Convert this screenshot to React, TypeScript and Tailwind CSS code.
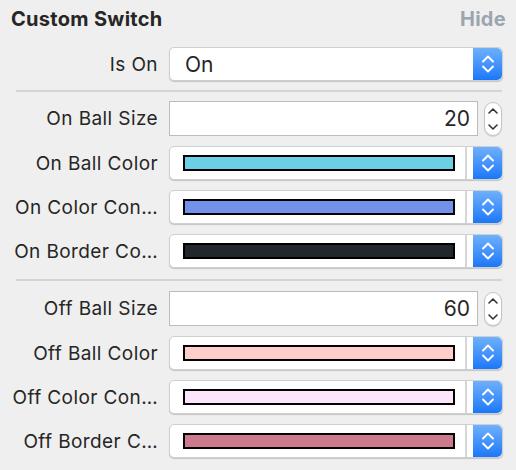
import React from "react";

const font = "font-['Inter','Noto_Sans',sans-serif]";

const Chevrons = ({ color = "#fff", w = 14, h = 22 }: { color?: string; w?: number; h?: number }) => (
  <svg width={w} height={h} viewBox="0 0 14 22" fill="none">
    <path d="M2 8.5 L7 3.5 L12 8.5" stroke={color} strokeWidth="1.9" strokeLinecap="round" strokeLinejoin="round" />
    <path d="M2 13.5 L7 18.5 L12 13.5" stroke={color} strokeWidth="1.9" strokeLinecap="round" strokeLinejoin="round" />
  </svg>
);

const StepperChevrons = () => (
  <svg width="12" height="28" viewBox="0 0 12 28" fill="none">
    <path d="M2 8 L6 4 L10 8" stroke="#333" strokeWidth="1.6" strokeLinecap="round" strokeLinejoin="round" />
    <path d="M2 20 L6 24 L10 20" stroke="#333" strokeWidth="1.6" strokeLinecap="round" strokeLinejoin="round" />
  </svg>
);

const BlueButton = () => (
  <div className="w-[29px] h-full flex items-center justify-center rounded-r-[5px] bg-gradient-to-b from-[#6db0fc] to-[#1877f8]">
    <Chevrons />
  </div>
);

const Label = ({ text }: { text: string }) => (
  <div className="w-[158px] text-right whitespace-nowrap text-[19px] leading-none tracking-[0.4px]">{text}</div>
);

const PopupRow = ({ label, value }: { label: string; value: string }) => (
  <div className="flex items-center h-[44px] gap-[11px]">
    <Label text={label} />
    <div className="flex w-[334px] h-[34px] bg-white rounded-[5px] border border-[#cfcfcf] shadow-[0_1px_1px_rgba(0,0,0,0.18)]">
      <div className="flex-1 flex items-center pl-[15px] text-[21px] leading-none">{value}</div>
      <BlueButton />
    </div>
  </div>
);

const ColorRow = ({ label, color }: { label: string; color: string }) => (
  <div className="flex items-center h-[44px] gap-[11px]">
    <Label text={label} />
    <div className="flex w-[334px] h-[34px] bg-white rounded-[5px] border border-[#cfcfcf] shadow-[0_1px_1px_rgba(0,0,0,0.18)]">
      <div className="flex-1 flex items-center pl-[13px] pr-[8px]">
        <div className="w-[272px] h-[16px] border-2 border-black" style={{ backgroundColor: color }} />
      </div>
      <div className="w-[2px] h-full bg-[#d6d6d6]" />
      <div className="w-[6px]" />
      <BlueButton />
    </div>
  </div>
);

const NumberRow = ({ label, value }: { label: string; value: string }) => (
  <div className="flex items-center h-[45px] gap-[11px]">
    <Label text={label} />
    <div className="flex items-center gap-[6px]">
      <div className="w-[309px] h-[35px] bg-white border border-[#bcbcbc] flex items-center justify-end pr-[7px] text-[21px] leading-none">
        {value}
      </div>
      <div className="w-[18px] h-[34px] bg-white rounded-[9px] border border-[#c4c4c4] shadow-[0_1px_1px_rgba(0,0,0,0.12)] flex items-center justify-center">
        <StepperChevrons />
      </div>
    </div>
  </div>
);

const Divider = ({ h }: { h: string }) => (
  <div className={`${h} flex items-center`}>
    <div className="ml-[16px] w-[486px] h-[2px] bg-[#d4d4d4]" />
  </div>
);

export default function App() {
  return (
    <div className={`w-[516px] h-[470px] bg-[#efefef] text-[#262626] ${font}`}>
      <div className="h-[42px] flex items-start justify-between pl-[11px] pr-[10px] pt-[8px]">
        <span className="text-[20px] font-bold leading-[22px] tracking-[0.3px]">Custom Switch</span>
        <span className="text-[20px] font-bold leading-[22px] tracking-[0.3px] text-[#9ba5b0]">Hide</span>
      </div>
      <PopupRow label="Is On" value="On" />
      <Divider h="h-[10px]" />
      <NumberRow label="On Ball Size" value="20" />
      <ColorRow label="On Ball Color" color="#6dcfe6" />
      <ColorRow label="On Color Con…" color="#7390ea" />
      <ColorRow label="On Border Co…" color="#22272e" />
      <Divider h="h-[13px]" />
      <NumberRow label="Off Ball Size" value="60" />
      <ColorRow label="Off Ball Color" color="#ffcdca" />
      <ColorRow label="Off Color Con…" color="#fce5fa" />
      <ColorRow label="Off Border C…" color="#cd7a8c" />
    </div>
  );
}
